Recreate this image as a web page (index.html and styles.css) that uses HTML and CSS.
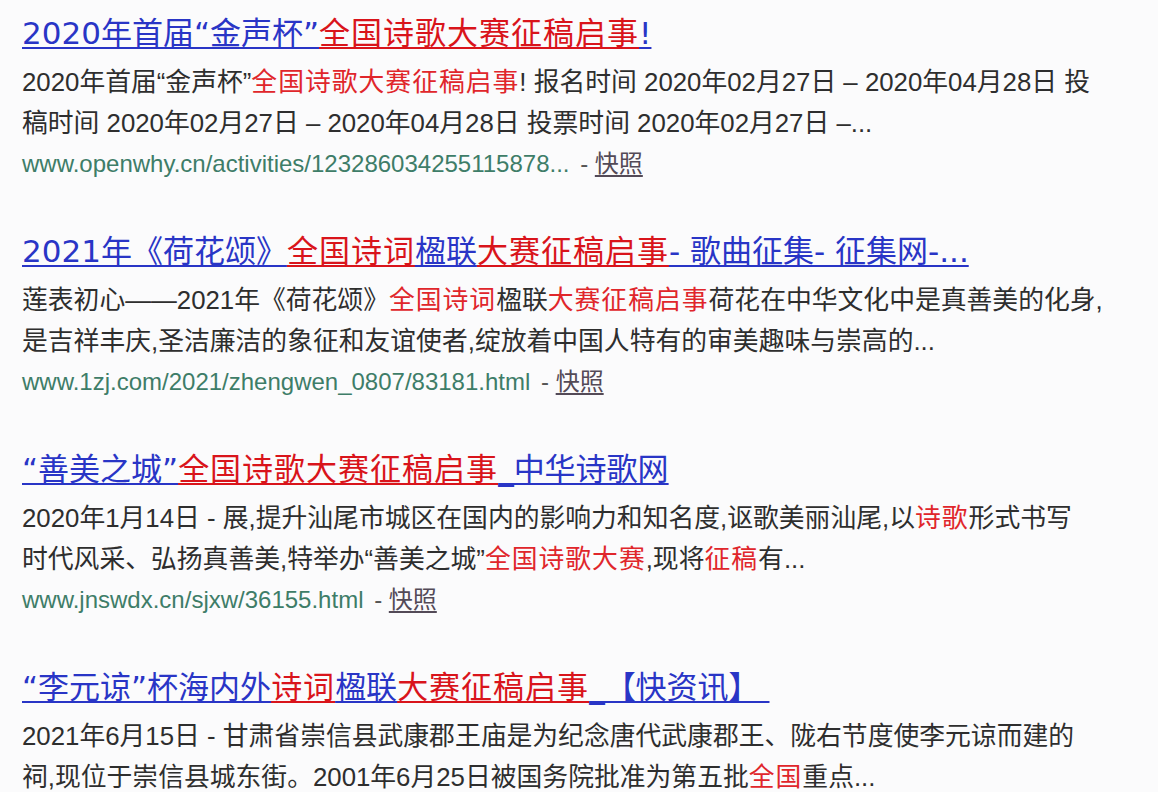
FILE: index.html
```html
<!DOCTYPE html>
<html lang="zh-CN">
<head>
<meta charset="utf-8">
<title>搜索结果</title>
<link rel="stylesheet" href="styles.css">
</head>
<body>
<div class="results">
  <div class="result">
    <a class="title" href="#">2020年首届“金声杯”<em>全国诗歌大赛征稿启事</em>!</a>
    <p class="abstract">2020年首届“金声杯”<em>全国诗歌大赛征稿启事</em>! 报名时间 2020年02月27日 – 2020年04月28日 投<br>稿时间 2020年02月27日 – 2020年04月28日 投票时间 2020年02月27日 –...</p>
    <div class="url">www.openwhy.cn/activities/123286034255115878... <span class="dash">-</span> <a class="snap" href="#">快照</a></div>
  </div>
  <div class="result">
    <a class="title" href="#">2021年《荷花颂》<em>全国诗词</em>楹联<em>大赛征稿启事</em>- 歌曲征集- 征集网-...</a>
    <p class="abstract">莲表初心——2021年《荷花颂》<em>全国诗词</em>楹联<em>大赛征稿启事</em>荷花在中华文化中是真善美的化身,<br>是吉祥丰庆,圣洁廉洁的象征和友谊使者,绽放着中国人特有的审美趣味与崇高的...</p>
    <div class="url">www.1zj.com/2021/zhengwen_0807/83181.html <span class="dash">-</span> <a class="snap" href="#">快照</a></div>
  </div>
  <div class="result">
    <a class="title" href="#">“善美之城”<em>全国诗歌大赛征稿启事</em>_中华诗歌网</a>
    <p class="abstract">2020年1月14日 - 展,提升汕尾市城区在国内的影响力和知名度,讴歌美丽汕尾,以<em>诗歌</em>形式书写<br>时代风采、弘扬真善美,特举办“善美之城”<em>全国诗歌大赛</em>,现将<em>征稿</em>有...</p>
    <div class="url">www.jnswdx.cn/sjxw/36155.html <span class="dash">-</span> <a class="snap" href="#">快照</a></div>
  </div>
  <div class="result">
    <a class="title" href="#">“李元谅”杯海内外<em>诗词</em>楹联<em>大赛征稿启事</em>_【快资讯】&nbsp;</a>
    <p class="abstract">2021年6月15日 - 甘肃省崇信县武康郡王庙是为纪念唐代武康郡王、陇右节度使李元谅而建的<br>祠,现位于崇信县城东街。2001年6月25日被国务院批准为第五批<em>全国</em>重点...</p>
  </div>
</div>
</body>
</html>
```
FILE: styles.css
```css
html, body {
  margin: 0;
  padding: 0;
  background: #fbfbfc;
}
body {
  font-family: "Liberation Sans", "Noto Sans CJK SC", sans-serif;
  color: #333;
  overflow: hidden;
}
.results {
  display: flex;
  flex-direction: column;
  gap: 47px;
  padding: 13px 0 0 22px;
}
.result {
  display: flex;
  flex-direction: column;
  align-items: flex-start;
  white-space: nowrap;
}
.title {
  font-family: "DejaVu Sans", "Noto Sans CJK SC", sans-serif;
  font-size: 31px;
  line-height: 40px;
  color: #2935c6;
  text-decoration: underline;
  text-underline-offset: 3px;
  text-decoration-thickness: 2px;
}
.title em {
  font-style: normal;
  color: #d9141b;
  letter-spacing: 1px;
  text-decoration: underline;
  text-underline-offset: 3px;
  text-decoration-thickness: 2px;
}
.abstract {
  margin: 9px 0 0 0;
  font-size: 25.8px;
  line-height: 41px;
  color: #2e2e2e;
}
.abstract em {
  font-style: normal;
  color: #e0262b;
  letter-spacing: 1px;
}
.url {
  font-size: 24px;
  line-height: 40px;
  color: #3e7d68;
}
.dash {
  color: #555;
  margin: 0 0 0 4px;
}
.snap {
  font-size: 24px;
  color: #534a57;
  text-decoration: underline;
  text-underline-offset: 3px;
}
```
